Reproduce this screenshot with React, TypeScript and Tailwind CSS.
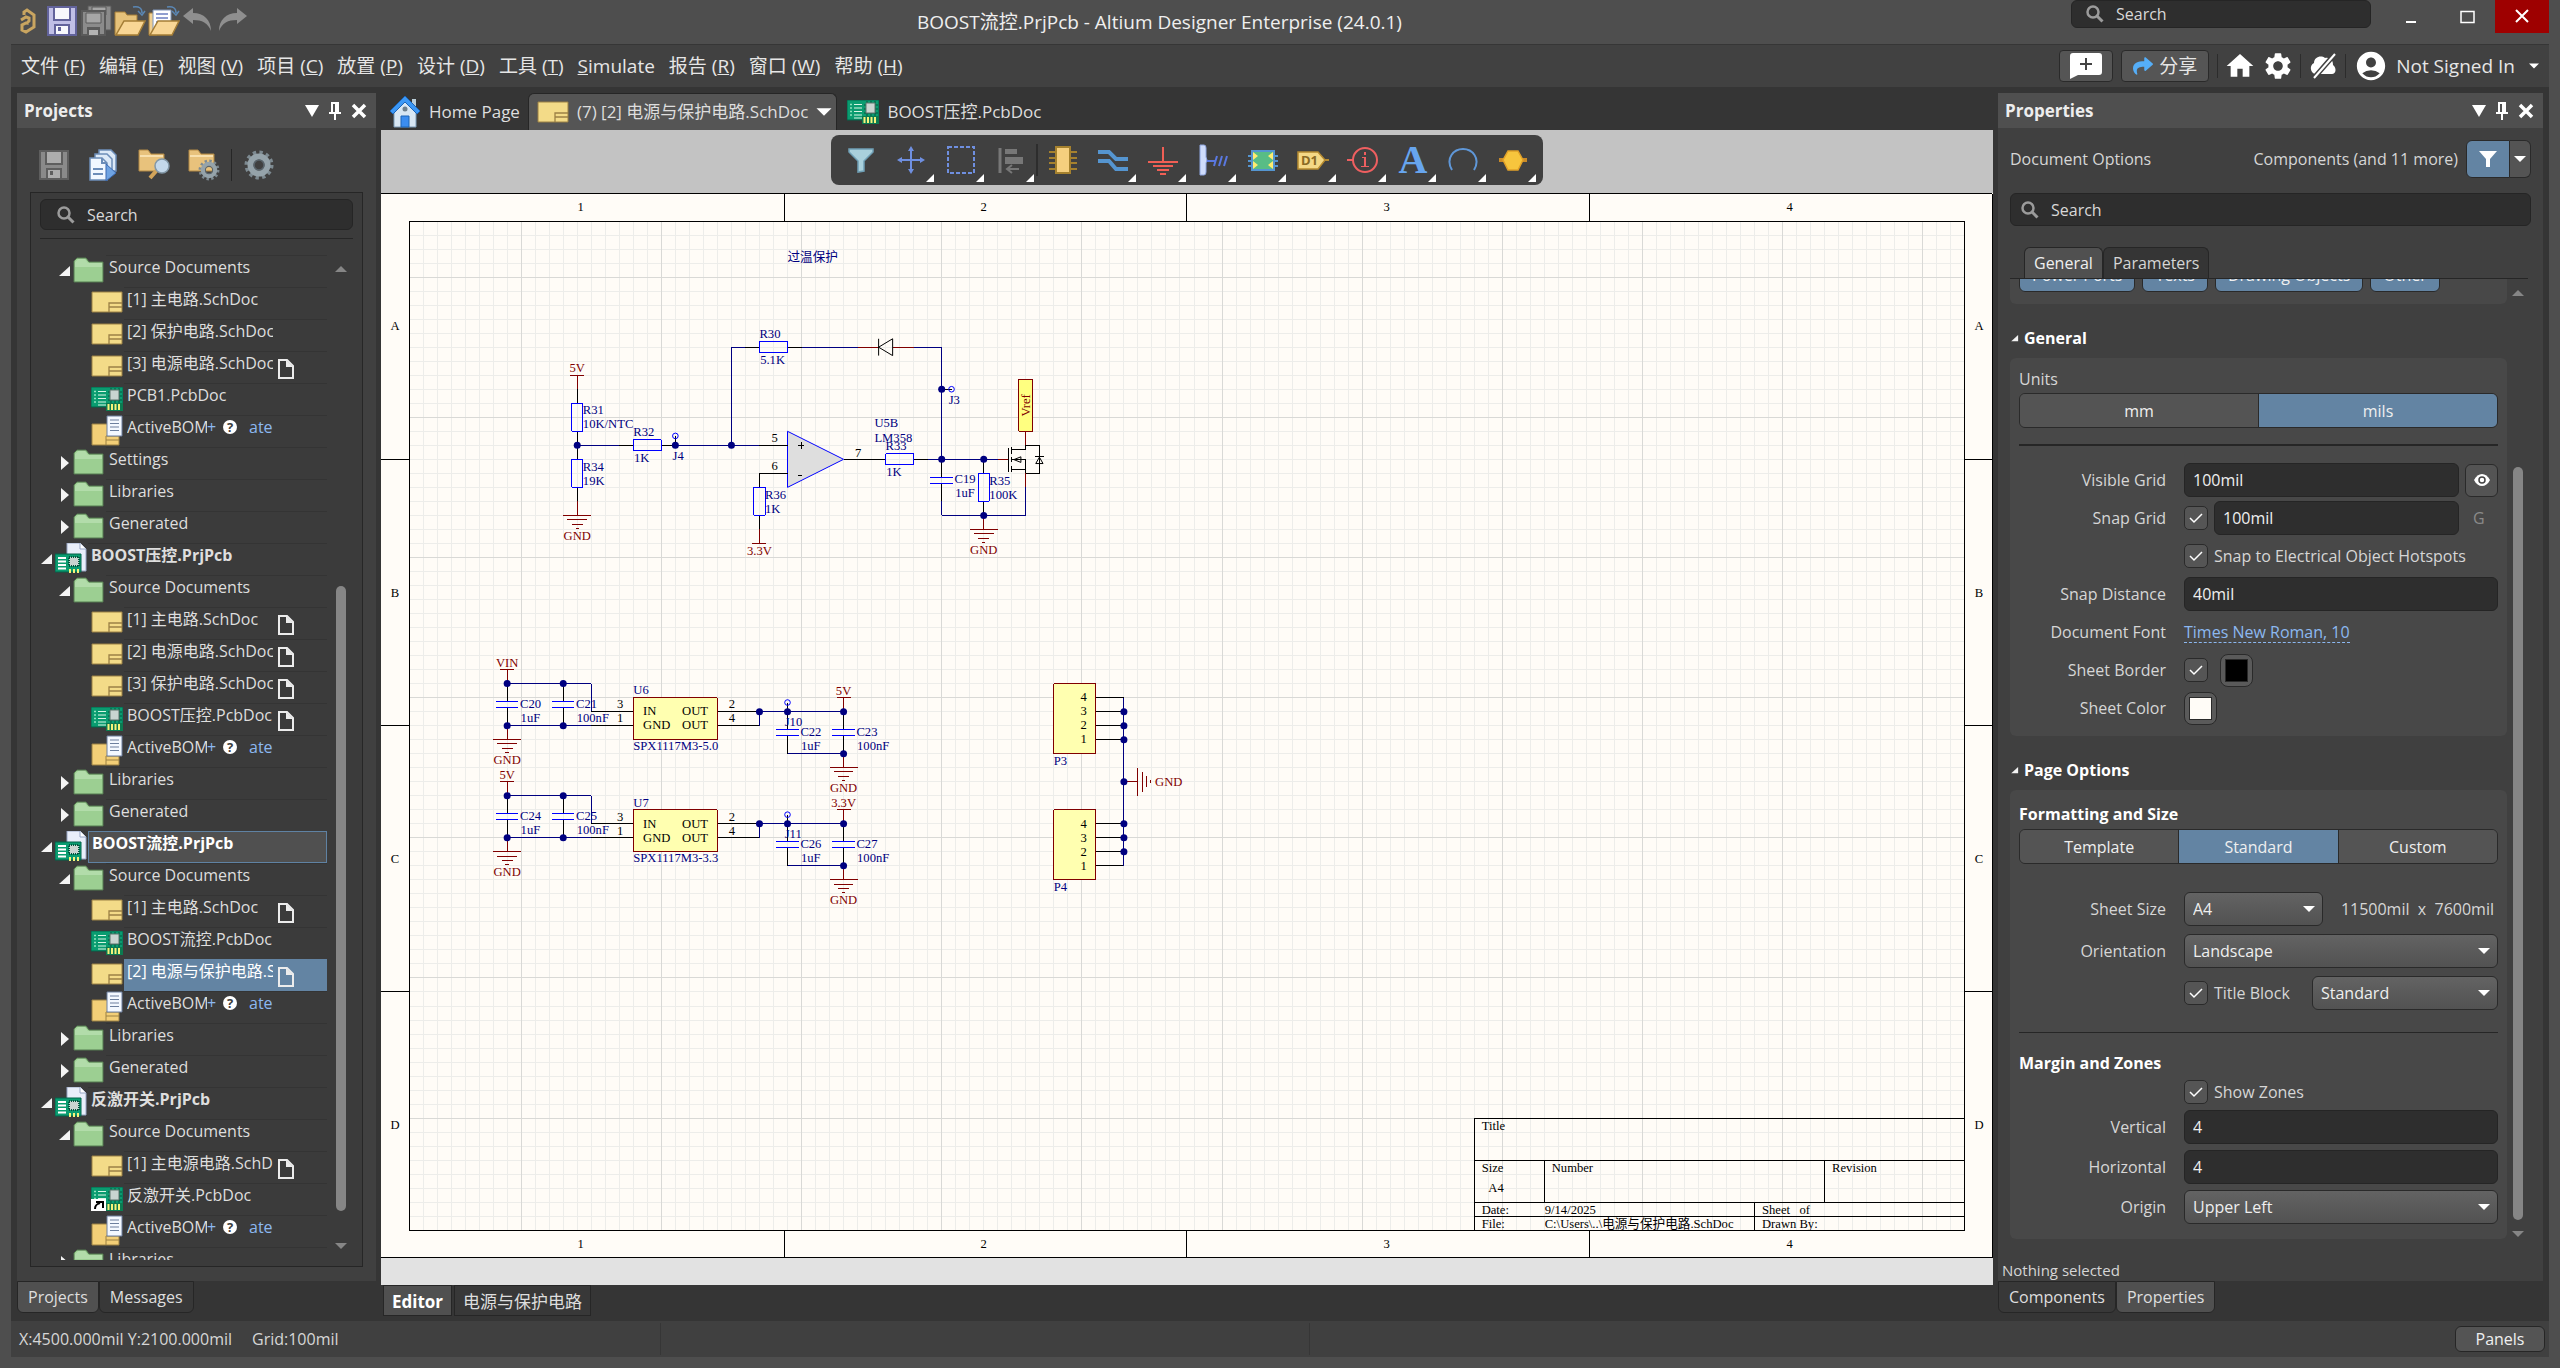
import type { ReactNode } from "react";
import clsx from "clsx";
import { FaShare } from "react-icons/fa";
import { MdAccountCircle, MdHome, MdSettings } from "react-icons/md";

const uiFont = "font-['Open_Sans','Noto_Sans_CJK_SC',sans-serif]";

/* ---------- icons ---------- */

function SaveIcon({ body = "#62639b", trim = "#c0bfe6", label = "#f7f8fc", className = "size-8" }) {
  return (
    <svg viewBox="0 0 32 32" className={className}>
      <path d="M2 2h28v28H2z" fill={trim} stroke={body} strokeWidth="2" />
      <path d="M7 2h18v14H7z" fill={body} />
      <path d="M9 3h14v11H9z" fill={label} />
      <path d="M8 19h16v11H8z" fill={body} />
      <path d="M10 21h12v8H10z" fill={label} />
      <path d="M12 22h3v4h-3z" fill={body} />
    </svg>
  );
}

function SaveAllIcon() {
  return (
    <svg viewBox="0 0 32 32" className="size-8">
      <path d="M8 1h23v24H8z" fill="#8b8b8b" stroke="#5a5a5a" />
      <path d="M12 2h14v8H12z" fill="#a6a6a6" stroke="#5a5a5a" />
      <path d="M2 6h23v24H2z" fill="#8b8b8b" stroke="#5a5a5a" strokeWidth="2" />
      <path d="M6 8h15v10H6z" fill="#a6a6a6" stroke="#5a5a5a" />
      <path d="M7 22h13v8H7z" fill="#5a5a5a" />
      <path d="M9 25h9v5H9z" fill="#b3b3b3" />
    </svg>
  );
}

function OpenFolderIcon({ doc = false }) {
  return (
    <svg viewBox="0 0 32 32" className="size-8">
      {!doc && <path d="M1 7h10l2 3h10v20H1z" fill="#e6c27a" stroke="#a47d36" />}
      {doc && (
        <>
          <path d="M1 8h8v22H1z" fill="#f0cf90" stroke="#a47d36" />
          <path d="M5 5h18v22H5z" fill="#fff" stroke="#7f94b8" />
          <path d="M8 9h12M8 13h12M8 17h12" stroke="#6c7fc0" strokeWidth="1.500" />
        </>
      )}
      <path d="M10 16h21l-7 14H2z" fill="#f8d695" stroke="#a47d36" strokeWidth="1.500" />
      <path d="M19 2c6-1 9 1 9 6M24 6l4 4 3-4" fill="none" stroke="#5b87b4" strokeWidth="1.500" />
    </svg>
  );
}

function UndoIcon({ flip = false }) {
  return (
    <svg viewBox="0 0 32 32" className={clsx("size-8", flip && "-scale-x-100")}>
      <path d="M1 11 11 3v5c11 0 18 7 18 18-3-8-9-11-18-11v4z" fill="#8f8f8f" />
    </svg>
  );
}

function SearchIcon() {
  return (
    <svg viewBox="0 0 18 18" className="size-[18px] shrink-0">
      <circle cx="7" cy="7" r="5.500" fill="none" stroke="#9b9b9b" strokeWidth="2.500" />
      <path d="m11 11 5.500 5.500" stroke="#9b9b9b" strokeWidth="3" />
    </svg>
  );
}

function LogoIcon() {
  return (
    <svg viewBox="0 0 20 28" className="h-7 w-5">
      <path
        d="M6 8V5l3-2 7 5v12l-8 5-4-2v-5l4-2h3M3 13l5-3 3 1v3l-3 3"
        fill="none"
        stroke="#c9a560"
        strokeWidth="3"
      />
    </svg>
  );
}

function DocsIcon() {
  return (
    <svg viewBox="0 0 32 32" className="size-8">
      <path d="M11 1h12l5 5v16H11z" fill="#dce9f7" stroke="#6c8db8" strokeWidth="1.500" />
      <path d="M7 5h12l5 5v16H7z" fill="#dce9f7" stroke="#6c8db8" strokeWidth="1.500" />
      <path d="M2 9h12l5 5v17H2z" fill="#f2f8ff" stroke="#6c8db8" strokeWidth="1.500" />
      <path d="M14 9v5h5M5 20h10M5 25h10" fill="none" stroke="#6c8db8" strokeWidth="2" />
      <path d="m18 15 10 9-10 8z" fill="#6fa3e2" stroke="#3a69b0" />
    </svg>
  );
}

function Gear({ cx = 16, cy = 16, s = 1 }) {
  return (
    <g transform={`translate(${cx} ${cy}) scale(${s})`} fill="none">
      <circle r="12.5" stroke="#7d8a91" strokeWidth="4" strokeDasharray="3.3 3.25" />
      <circle r="8.5" stroke="#95a3aa" strokeWidth="6" />
      <circle r="5" stroke="#59646b" strokeWidth="1.5" />
    </g>
  );
}

function ToolFolderIcon({ children }: { children: ReactNode }) {
  return (
    <svg viewBox="0 0 32 32" className="size-8">
      <path d="M1 1h9l3 4h13v17H1z" fill="#e8c27c" stroke="#b18845" />
      <path d="M2 7h23" stroke="#f8e0ae" strokeWidth="2" />
      {children}
    </svg>
  );
}

function FolderIcon() {
  return (
    <svg viewBox="0 0 32 26" className="mt-[2px] h-[26px] w-8">
      <path d="M1 25V4l3-3h9l3 4h14v20z" fill="#9ccf92" stroke="#557a50" />
      <path d="M2 24V5l3-3h7l3 4h14v4H2z" fill="#b2dcaa" />
    </svg>
  );
}

function SchIcon({ className = "mt-1 h-[22px] w-8" }) {
  return (
    <svg viewBox="0 0 32 22" className={className}>
      <path d="M1 1h30v20H1z" fill="#f3db88" stroke="#9c8145" />
      <path d="M31 12H18v9M18 16h13" fill="none" stroke="#9c8145" strokeWidth="1.3" />
    </svg>
  );
}

function PcbIcon({ link = false, className = "mt-1 h-6 w-8" }) {
  return (
    <svg viewBox="0 0 32 24" className={className}>
      <path d="M0 0h32v20H0z" fill="#0a9c70" stroke="#04634a" />
      <path d="M7 4.500h8M7 8h8M7 11.500h8M7 15h8M7 18h8" stroke="#d8f5e4" strokeWidth="1.200" />
      <path d="M3 4.500h2M3 8h2M3 11.500h2M3 15h2" stroke="#8fe2bd" strokeWidth="1.500" />
      <path d="M17 5h14M17 9h14M17 13h14M20 1v15M24 1v15M28 1v15" stroke="#04543e" />
      <path d="M19 3h9v10h-9z" fill="#c9d4d0" stroke="#5d756c" />
      <path d="M15 16h17v8H15z" fill="#0c7a50" />
      <path d="M17.500 17v6M21 17v6M24.500 17v6M28 17v6" stroke="#f6f27b" strokeWidth="2" />
      {link && (
        <>
          <path d="M0 12h15v12H0z" fill="#fff" />
          <path d="M4 22c0-4 2-5 5-6M5 15h7v6" fill="none" stroke="#000" strokeWidth="2" />
        </>
      )}
    </svg>
  );
}

function BomIcon() {
  return (
    <svg viewBox="0 0 32 32" className="h-8 w-8">
      <path d="M1 9h27v21H1z" fill="#f3cf77" stroke="#9c8145" />
      <path d="M28 21H15v9M15 25h13" fill="none" stroke="#9c8145" />
      <path d="M16 1h15v20H16z" fill="#f3f8ff" stroke="#6c7f9e" />
      <path d="M19 5h9M19 8.500h9M19 12h9M19 15.500h9" stroke="#6c7f9e" />
    </svg>
  );
}

function ProjectIcon() {
  return (
    <svg viewBox="0 0 32 32" className="h-8 w-8">
      <path d="M12 0h13l6 6v22H12z" fill="#e9eefa" stroke="#97a5c4" />
      <path d="M25 0v6h6" fill="#fff" stroke="#97a5c4" />
      <path d="M0 11h26v18H0z" fill="#0a9c70" stroke="#04634a" />
      <path d="M3 15h8M3 18.500h8M3 22h8M3 25.500h8" stroke="#fff" strokeWidth="1.800" />
      <path d="M14 14h10v9H14z" fill="#c9d4d0" stroke="#04543e" strokeDasharray="1 1" strokeWidth="2" />
      <path d="M15 26v4M19 26v4M23 26v4" stroke="#f6f27b" strokeWidth="2" />
    </svg>
  );
}

function HomePageIcon() {
  return (
    <svg viewBox="0 0 30 32" className="h-8 w-8">
      <path d="M22 3h4v9h-4z" fill="#b9cdd8" />
      <path d="M4 15 15 3l11 12v16H4z" fill="#d7e6f3" stroke="#7d9cb8" />
      <path d="M15 0 30 15l-3 3L15 6 3 18l-3-3z" fill="#3b97f5" stroke="#1d64b6" />
      <circle cx="15" cy="13" r="2.500" fill="#6d7f8c" />
      <path d="M11 20h8v11h-8z" fill="#3b8df0" stroke="#1d64b6" />
    </svg>
  );
}

function NewDocIcon() {
  return (
    <svg viewBox="0 0 16 20" className="mt-[7px] h-5 w-4">
      <path d="M1 1h8l6 6v12H1z" fill="none" stroke="#ececec" strokeWidth="2" />
      <path d="M8 1v7h7z" fill="#ececec" />
    </svg>
  );
}

function Caret({ className = "h-2 w-3" }) {
  return (
    <svg viewBox="0 0 12 8" className={className}>
      <path d="M0 1h12L6 7z" fill="currentColor" />
    </svg>
  );
}

function Expander({ open, className = "size-4" }: { open: boolean; className?: string }) {
  return (
    <svg viewBox="0 0 16 16" className={className}>
      <path d={open ? "M13 3v10H2z" : "M4 1l8 7-8 7z"} fill="#f4f4f4" />
    </svg>
  );
}

/* ---------- shared pieces ---------- */

function PanelHeader({ title }: { title: string }) {
  return (
    <header className="flex h-[35px] shrink-0 items-center bg-[#4f4f4f] pr-[9px] pl-[7px]">
      <h2 className="flex-1 text-[17px] leading-6 font-bold text-[#ededed]">{title}</h2>
      <div className="flex items-center gap-2.5 text-white">
        <button aria-label={`${title} menu`}>
          <svg viewBox="0 0 14 12" className="h-3 w-3.5">
            <path d="M0 0h14L7 12z" fill="currentColor" />
          </svg>
        </button>
        <button aria-label={`Pin ${title}`}>
          <svg viewBox="0 0 12 18" className="h-[18px] w-3">
            <path d="M2 0h8v10h2v2H0v-2h2zM5 12h2v6H5z" fill="currentColor" />
            <path d="M4 2h2v8H4z" fill="#4f4f4f" />
          </svg>
        </button>
        <button aria-label={`Close ${title}`}>
          <svg viewBox="0 0 16 16" className="size-4">
            <path d="M2 2l12 12M14 2 2 14" stroke="currentColor" strokeWidth="3.500" />
          </svg>
        </button>
      </div>
    </header>
  );
}

function SearchBox({ id, className }: { id: string; className?: string }) {
  return (
    <label
      htmlFor={id}
      className={clsx("flex items-center gap-3 rounded-md border border-[#252525] bg-[#2e2e2e]", className)}
    >
      <SearchIcon />
      <input
        id={id}
        placeholder="Search"
        className="w-full min-w-0 bg-transparent text-base leading-6 outline-none placeholder:text-[#d8d8d8]"
      />
    </label>
  );
}

function Scrollbar({ className, before, after }: { className?: string; before: string; after: string }) {
  return (
    <div className={clsx("flex shrink-0 flex-col items-center text-[#868686]", className)}>
      <Caret className="h-2 w-3 rotate-180" />
      <div className={clsx("shrink-0", before)} />
      <div className="w-2.5 flex-1 rounded-full bg-[#868686]" />
      <div className={clsx("shrink-0", after)} />
      <Caret className="h-2 w-3 shrink-0" />
    </div>
  );
}

/* ---------- title and menu bars ---------- */

function TitleBar() {
  return (
    <div className="flex h-11 shrink-0 items-start">
      <div className="flex h-[42px] w-[237px] items-center gap-0.5 pl-[7px]">
        <LogoIcon />
        <button aria-label="Save" className="ml-1.5">
          <SaveIcon />
        </button>
        <button aria-label="Save all">
          <SaveAllIcon />
        </button>
        <button aria-label="Open">
          <OpenFolderIcon />
        </button>
        <button aria-label="Open document">
          <OpenFolderIcon doc />
        </button>
        <button aria-label="Undo">
          <UndoIcon />
        </button>
        <button aria-label="Redo">
          <UndoIcon flip />
        </button>
      </div>
      <h1 className="h-11 flex-1 text-center text-[19px] leading-[44px] text-[#efefef]">
        BOOST流控.PrjPcb - Altium Designer Enterprise (24.0.1)
      </h1>
      <SearchBox id="app-search" className="h-7 w-[300px] px-3.5" />
      <div className="ml-5 flex h-[33px] text-white">
        <button aria-label="Minimize" className="w-[50px]">
          <svg viewBox="0 0 50 33" className="h-[33px] w-[50px]">
            <path d="M15 22h10" stroke="currentColor" strokeWidth="2" />
          </svg>
        </button>
        <button aria-label="Maximize" className="w-[54px]">
          <svg viewBox="0 0 54 33" className="h-[33px] w-[54px]">
            <path d="M20 11.500h13v11H20z" fill="none" stroke="currentColor" strokeWidth="1.500" />
          </svg>
        </button>
        <button aria-label="Close" className="w-[54px] bg-[#9e0000]">
          <svg viewBox="0 0 54 33" className="h-[33px] w-[54px]">
            <path d="m21 10 12 12M33 10 21 22" stroke="currentColor" strokeWidth="2" />
          </svg>
        </button>
      </div>
    </div>
  );
}

const menus = [
  ["文件", "F"],
  ["编辑", "E"],
  ["视图", "V"],
  ["项目", "C"],
  ["放置", "P"],
  ["设计", "D"],
  ["工具", "T"],
  ["Simulate", ""],
  ["报告", "R"],
  ["窗口", "W"],
  ["帮助", "H"],
];

function MenuBar() {
  return (
    <div className="flex h-[43px] shrink-0 items-center border-t border-[#363636] bg-[#414141]">
      <nav className="flex flex-1 gap-3.5 pl-2.5">
        {menus.map(([name, key]) => (
          <button key={name} className="text-[19px] leading-6 whitespace-nowrap text-[#e6e6e6]">
            {key ? (
              <>
                {name} (<u>{key}</u>)
              </>
            ) : (
              <>
                <u>S</u>imulate
              </>
            )}
          </button>
        ))}
      </nav>
      <div className="flex items-center text-white">
        <button aria-label="Comment" className="flex h-8 w-[54px] items-center justify-center rounded border border-[#2a2a2a] bg-[#555]">
          <svg viewBox="0 0 32 26" className="h-[26px] w-8">
            <path d="M3 0h26q3 0 3 3v16q0 3-3 3H8l-8 4V3q0-3 3-3z" fill="currentColor" />
            <path d="M16 5v12M10 11h12" stroke="#444" strokeWidth="2" />
          </svg>
        </button>
        <button className="mr-2 ml-2 flex h-8 w-[88px] items-center justify-center gap-1.5 rounded border border-[#2a2a2a] bg-[#555] text-[19px] leading-6 text-[#e6e6e6]">
          <FaShare className="size-5 text-[#55aef8]" />
          分享
        </button>
        <span className="h-6 w-px bg-[#2c2c2c]" />
        <button aria-label="Home" className="ml-1.5">
          <MdHome className="size-8" />
        </button>
        <button aria-label="Settings" className="mx-1.5">
          <MdSettings className="size-8" />
        </button>
        <span className="h-6 w-px bg-[#2c2c2c]" />
        <button aria-label="Server offline" className="mx-2">
          <svg viewBox="0 0 28 26" className="h-[26px] w-7">
            <path d="M6 21a6 6 0 0 1-1-11C5 4 12 2 16 5c6-1 8 3 8 7 4 3 3 9-1 9z" fill="currentColor" />
            <path d="M25 2 5 25" stroke="#414141" strokeWidth="5" />
            <path d="M26 1 5 25" stroke="currentColor" strokeWidth="2" />
          </svg>
        </button>
        <span className="h-6 w-px bg-[#2c2c2c]" />
        <button className="mr-2.5 ml-2 flex items-center gap-2 text-[19px] leading-6 text-[#e6e6e6]">
          <MdAccountCircle className="size-[34px] text-white" />
          Not Signed In
          <Caret className="ml-1.5 h-2 w-2.5 text-white" />
        </button>
      </div>
    </div>
  );
}

/* ---------- projects panel ---------- */

type Node = {
  kind: "project" | "folder" | "sch" | "pcb" | "pcbLink" | "bom";
  name: string;
  open?: boolean;
  modified?: boolean;
  state?: "outlined" | "selected";
};

const bom: Node = { kind: "bom", name: "ActiveBOM" };
const sources: Node = { kind: "folder", name: "Source Documents", open: true };
const libraries: Node = { kind: "folder", name: "Libraries" };
const generated: Node = { kind: "folder", name: "Generated" };

const tree: Node[] = [
  sources,
  { kind: "sch", name: "[1] 主电路.SchDoc" },
  { kind: "sch", name: "[2] 保护电路.SchDoc" },
  { kind: "sch", name: "[3] 电源电路.SchDoc", modified: true },
  { kind: "pcb", name: "PCB1.PcbDoc" },
  bom,
  { kind: "folder", name: "Settings" },
  libraries,
  generated,
  { kind: "project", name: "BOOST压控.PrjPcb", open: true },
  sources,
  { kind: "sch", name: "[1] 主电路.SchDoc", modified: true },
  { kind: "sch", name: "[2] 电源电路.SchDoc", modified: true },
  { kind: "sch", name: "[3] 保护电路.SchDoc", modified: true },
  { kind: "pcb", name: "BOOST压控.PcbDoc", modified: true },
  bom,
  libraries,
  generated,
  { kind: "project", name: "BOOST流控.PrjPcb", open: true, state: "outlined" },
  sources,
  { kind: "sch", name: "[1] 主电路.SchDoc", modified: true },
  { kind: "pcb", name: "BOOST流控.PcbDoc" },
  { kind: "sch", name: "[2] 电源与保护电路.SchDoc", modified: true, state: "selected" },
  bom,
  libraries,
  generated,
  { kind: "project", name: "反激开关.PrjPcb", open: true },
  sources,
  { kind: "sch", name: "[1] 主电源电路.SchDoc", modified: true },
  { kind: "pcbLink", name: "反激开关.PcbDoc" },
  bom,
  libraries,
];

function TreeIcon({ kind }: { kind: Node["kind"] }) {
  if (kind === "project") return <ProjectIcon />;
  if (kind === "folder") return <FolderIcon />;
  if (kind === "sch") return <SchIcon />;
  if (kind === "bom") return <BomIcon />;
  return <PcbIcon link={kind === "pcbLink"} />;
}

function TreeRow({ node }: { node: Node }) {
  const leaf = node.kind !== "project" && node.kind !== "folder";
  return (
    <li
      className={clsx(
        "flex h-8 shrink-0",
        node.kind === "project" && "pl-2",
        node.kind === "folder" && "pl-[26px]",
        leaf && "pl-[60px]"
      )}
    >
      {!leaf && <Expander open={!!node.open} className="mt-2 size-4 shrink-0" />}
      <span className="w-[33px] shrink-0">
        <TreeIcon kind={node.kind} />
      </span>
      <div
        className={clsx(
          "flex min-w-0 flex-1 border-t pl-[3px] leading-[22px] whitespace-nowrap",
          !node.state && "border-[#343434] text-[#dedede]",
          node.state === "outlined" && "border border-[#5f82a3] bg-[#505050] text-white",
          node.state === "selected" && "border-[#6384a3] bg-[#6384a3] text-white",
          node.kind === "project" && "font-bold"
        )}
      >
        {node.kind === "bom" ? (
          <>
            <span className="w-20 overflow-hidden">{node.name}</span>
            <span className="w-4 text-[#8cb8f0]">+</span>
            <span className="mt-1 size-[14px] rounded-full bg-white text-center text-[13px] leading-[14px] font-bold text-[#3b3b3b]">
              ?
            </span>
            <span className="ml-3 text-[#8cb8f0]">ate</span>
          </>
        ) : (
          <span className={clsx(leaf && "w-[146px] overflow-hidden")}>{node.name}</span>
        )}
        {node.modified && (
          <span className="ml-[5px]">
            <NewDocIcon />
          </span>
        )}
      </div>
    </li>
  );
}

function ProjectsPanel() {
  return (
    <aside className="flex w-[359px] shrink-0 flex-col text-base">
      <div className="flex min-h-0 flex-1 flex-col bg-[#404040]">
        <PanelHeader title="Projects" />
        <div className="flex h-16 shrink-0 items-center pt-2.5 pl-[21px]">
          <button aria-label="Save project">
            <SaveIcon body="#5e5e5e" trim="#8a8a8a" label="#adadad" />
          </button>
          <button aria-label="Copy documents" className="ml-[18px]">
            <DocsIcon />
          </button>
          <button aria-label="Find in project" className="ml-[18px]">
            <ToolFolderIcon>
              <path d="m19 21-7 8" stroke="#d2a45a" strokeWidth="4" />
              <circle cx="24" cy="17" r="7" fill="#c3d8ea" stroke="#8297a6" strokeWidth="1.500" />
            </ToolFolderIcon>
          </button>
          <button aria-label="Project options" className="ml-[18px]">
            <ToolFolderIcon>
              <Gear cx={21} cy={21} s={0.72} />
            </ToolFolderIcon>
          </button>
          <span className="mx-[11px] h-8 w-px bg-[#262626]" />
          <button aria-label="Panel settings">
            <svg viewBox="0 0 32 32" className="size-8">
              <Gear />
            </svg>
          </button>
        </div>
        <div className="mx-[13px] mb-3.5 flex min-h-0 flex-1 flex-col border border-[#262626] bg-[#3b3b3b] pt-1.5 pb-1.5">
          <SearchBox id="project-search" className="mx-[9px] h-[31px] shrink-0 px-4" />
          <hr className="mx-[9px] mt-2 border-[#262626]" />
          <div className="mt-4 flex min-h-0 flex-1 overflow-hidden">
            <ul className="flex min-w-0 flex-1 flex-col">
              {tree.map((node, i) => (
                <TreeRow key={i} node={node} />
              ))}
            </ul>
            <Scrollbar className="mr-2 w-[27px] pt-2.5 pb-2.5" before="h-[313px]" after="h-[31px]" />
          </div>
        </div>
      </div>
      <BottomTabs tabs={["Projects", "Messages"]} active="Projects" />
    </aside>
  );
}

function BottomTabs({ tabs, active }: { tabs: string[]; active: string }) {
  return (
    <div className="flex h-10 shrink-0 items-start">
      {tabs.map((tab) => (
        <button
          key={tab}
          className={clsx(
            "h-8 rounded-b-md border border-[#262626] px-2.5 text-base leading-[30px] text-[#dedede]",
            tab === active ? "bg-[#505050]" : "bg-[#383838]"
          )}
        >
          {tab}
        </button>
      ))}
    </div>
  );
}

/* ---------- schematic sheet, in mils ---------- */

const navy = "#000080";
const maroon = "#800000";

function Wire({ d, color = navy }: { d: string; color?: string }) {
  return (
    <path d={d} fill="none" stroke={color} strokeWidth="1" vectorEffect="non-scaling-stroke" shapeRendering="crispEdges" />
  );
}

type LabelProps = { x: number; y: number; color?: string; anchor?: "start" | "middle" | "end"; children: ReactNode };

function Label({ x, y, color = navy, anchor = "start", children }: LabelProps) {
  return (
    <text x={x} y={y} fill={color} textAnchor={anchor} fontSize="90">
      {children}
    </text>
  );
}

function Dot({ x, y }: { x: number; y: number }) {
  return <circle cx={x} cy={y} r="25" fill={navy} />;
}

type BoxProps = { x: number; y: number; w: number; h: number; fill?: string; stroke?: string };

function Box({ x, y, w, h, fill = "none", stroke = "#0000ff" }: BoxProps) {
  return (
    <rect
      x={x}
      y={y}
      width={w}
      height={h}
      fill={fill}
      stroke={stroke}
      vectorEffect="non-scaling-stroke"
      shapeRendering="crispEdges"
    />
  );
}

type PartProps = { x: number; y: number; name: string; value: string };

// x, y is the first pin; the body sits one grid step away
function Resistor({ x, y, name, value, vertical = false }: PartProps & { vertical?: boolean }) {
  if (vertical) {
    return (
      <>
        <Wire color="#000" d={`M${x} ${y}v100M${x} ${y + 300}v100`} />
        <Box x={x - 40} y={y + 100} w={80} h={200} />
        <Label x={x + 40} y={y + 180}>{name}</Label>
        <Label x={x + 40} y={y + 280}>{value}</Label>
      </>
    );
  }
  return (
    <>
      <Wire color="#000" d={`M${x} ${y}h100M${x + 300} ${y}h100`} />
      <Box x={x + 100} y={y - 40} w={200} h={80} />
      <Label x={x + 100} y={y - 63}>{name}</Label>
      <Label x={x + 105} y={y + 118}>{value}</Label>
    </>
  );
}

function Capacitor({ x, y, name, value }: PartProps) {
  return (
    <>
      <Wire color="#000" d={`M${x} ${y}v130M${x} ${y + 170}v130`} />
      <Wire color="#0000ff" d={`M${x - 80} ${y + 130}h160M${x - 80} ${y + 170}h160`} />
      <Label x={x + 92} y={y + 172}>{name}</Label>
      <Label x={x + 96} y={y + 272}>{value}</Label>
    </>
  );
}

function Ground({ x, y }: { x: number; y: number }) {
  return (
    <>
      <Wire
        color={maroon}
        d={`M${x} ${y}v100M${x - 100} ${y + 100}h200M${x - 70} ${y + 130}h140M${x - 40} ${y + 162}h80M${x - 12} ${y + 192}h24`}
      />
      <Label x={x} y={y + 275} color={maroon} anchor="middle">GND</Label>
    </>
  );
}

function Power({ x, y, name }: { x: number; y: number; name: string }) {
  return (
    <>
      <Wire color={maroon} d={`M${x} ${y}v-100M${x - 50} ${y - 100}h100`} />
      <Label x={x} y={y - 120} color={maroon} anchor="middle">{name}</Label>
    </>
  );
}

function TestPoint({ x, y, dx = 0, dy = 0 }: { x: number; y: number; dx?: number; dy?: number }) {
  return (
    <>
      <Wire color="#000" d={`M${x} ${y}l${dx} ${dy}`} />
      <circle cx={x + dx} cy={y + dy} r="20" fill="none" stroke="#0000ff" vectorEffect="non-scaling-stroke" />
    </>
  );
}

type RegulatorProps = {
  y: number;
  input: string;
  output: string;
  name: string;
  part: string;
  caps: string[];
  tp: string;
};

function Regulator({ y, input, output, name, part, caps, tp }: RegulatorProps) {
  return (
    <g>
      <Power x={900} y={y} name={input} />
      <Wire d={`M900 ${y}H1500v200M900 ${y + 300}H1500M2700 ${y + 300}v-100H3300M2900 ${y + 500}h400`} />
      <Wire color="#000" d={`M1500 ${y + 200}h300M1500 ${y + 300}h300M2400 ${y + 200}h300M2400 ${y + 300}h300`} />
      <Box x={1800} y={y + 100} w={600} h={300} fill="#ffffb0" stroke={maroon} />
      <Capacitor x={900} y={y} name={caps[0]} value="1uF" />
      <Capacitor x={1300} y={y} name={caps[1]} value="100nF" />
      <Capacitor x={2900} y={y + 200} name={caps[2]} value="1uF" />
      <Capacitor x={3300} y={y + 200} name={caps[3]} value="100nF" />
      <Ground x={900} y={y + 300} />
      <Ground x={3300} y={y + 500} />
      <Power x={3300} y={y + 200} name={output} />
      <TestPoint x={2900} y={y + 200} dy={-65} />
      <Label x={2880} y={y + 300}>{tp}</Label>
      <Label x={1800} y={y + 77}>{name}</Label>
      <Label x={1800} y={y + 476}>{part}</Label>
      <Label x={1870} y={y + 227} color="#000">IN</Label>
      <Label x={1870} y={y + 327} color="#000">GND</Label>
      <Label x={2333} y={y + 227} color="#000" anchor="end">OUT</Label>
      <Label x={2333} y={y + 327} color="#000" anchor="end">OUT</Label>
      <Label x={1684} y={y + 177} color="#000">3</Label>
      <Label x={1684} y={y + 277} color="#000">1</Label>
      <Label x={2480} y={y + 177} color="#000">2</Label>
      <Label x={2480} y={y + 277} color="#000">4</Label>
      <Dot x={900} y={y} />
      <Dot x={1300} y={y} />
      <Dot x={900} y={y + 300} />
      <Dot x={1300} y={y + 300} />
      <Dot x={2700} y={y + 200} />
      <Dot x={2900} y={y + 200} />
      <Dot x={3300} y={y + 200} />
      <Dot x={3300} y={y + 500} />
    </g>
  );
}

function Header4({ y, name }: { y: number; name: string }) {
  return (
    <g>
      <Box x={4800} y={y} w={300} h={500} fill="#ffffb0" stroke={maroon} />
      {[4, 3, 2, 1].map((pin, i) => (
        <g key={pin}>
          <Wire color="#000" d={`M5100 ${y + 100 + i * 100}h200`} />
          <Label x={5035} y={y + 127 + i * 100} color="#000" anchor="end">{pin}</Label>
        </g>
      ))}
      <Label x={4800} y={y + 578}>{name}</Label>
    </g>
  );
}

function Protection() {
  return (
    <g>
      <Label x={2900} y={485}>过温保护</Label>
      <Power x={1400} y={1400} name="5V" />
      <Resistor vertical x={1400} y={1400} name="R31" value="10K/NTC" />
      <Resistor vertical x={1400} y={1800} name="R34" value="19K" />
      <Ground x={1400} y={2200} />
      <Wire d="M1400 1800H1700M2100 1800H2700M2500 1800V1100H2600M3000 1100H3400M3800 1100H4000V1900M3900 1900H4400M4000 2200V2300H4600V2100" />
      <Resistor x={1700} y={1800} name="R32" value="1K" />
      <Resistor x={2600} y={1100} name="R30" value="5.1K" />
      <Resistor x={3500} y={1900} name="R33" value="1K" />
      <Wire color={maroon} d="M3400 1100H3550M3650 1100H3800M4400 1900H4475M4600 1700V1800M4600 2000V2100" />
      <path d="M3550 1040v120M3550 1100l100-60v120z" fill="none" stroke="#000" vectorEffect="non-scaling-stroke" />

      <path d="M2900 1700V2100L3300 1900z" fill="#dedede" stroke="#0000ff" vectorEffect="non-scaling-stroke" />
      <Wire color="#000" d="M2700 1800H2900M2700 2000H2900M2700 2000V2100M3300 1900H3500M2975 1800h45M2997 1778v45M2975 2015h25" />
      <Label x={2785} y={1779} color="#000">5</Label>
      <Label x={2785} y={1979} color="#000">6</Label>
      <Label x={3382} y={1881} color="#000">7</Label>
      <Label x={3520} y={1667}>U5B</Label>
      <Label x={3520} y={1774}>LM358</Label>
      <Resistor vertical x={2700} y={2000} name="R36" value="1K" />
      <Wire color={maroon} d="M2700 2400v100M2650 2500h100" />
      <Label x={2700} y={2580} color={maroon} anchor="middle">3.3V</Label>

      <TestPoint x={2100} y={1800} dy={-67} />
      <Label x={2080} y={1902}>J4</Label>
      <TestPoint x={4000} y={1400} dx={70} />
      <Label x={4050} y={1508}>J3</Label>

      <Capacitor x={4000} y={1900} name="C19" value="1uF" />
      <Resistor vertical x={4300} y={1900} name="R35" value="100K" />
      <Ground x={4300} y={2300} />

      <Wire
        color="#000"
        d="M4475 1820V1988M4497 1814V1862M4497 1880V1922M4497 1945V1993M4497 1829H4600V1800H4700V2000H4600V1902H4497M4497 1969H4600M4667 1881H4730"
      />
      <path d="M4515 1902l50-20v40zM4697 1885l-26 45h52z" fill="none" stroke="#000" vectorEffect="non-scaling-stroke" />
      <Box x={4550} y={1330} w={100} h={370} fill="#ffff80" stroke={maroon} />
      <text transform="translate(4628 1515) rotate(-90)" fill={maroon} textAnchor="middle" fontSize="90">
        Vref
      </text>

      <Dot x={1400} y={1800} />
      <Dot x={2100} y={1800} />
      <Dot x={2500} y={1800} />
      <Dot x={4000} y={1400} />
      <Dot x={4000} y={1900} />
      <Dot x={4300} y={1900} />
      <Dot x={4300} y={2300} />
    </g>
  );
}

function TitleBlock() {
  return (
    <g>
      <Wire color="#000" d="M7800 7400V6600H11300M7800 6900H11300M7800 7200H11300M7800 7300H11300M8300 6900v300M10300 6900v300M9800 7200v200" />
      <Label x={7852} y={6682} color="#000">Title</Label>
      <Label x={7852} y={6982} color="#000">Size</Label>
      <Label x={7900} y={7130} color="#000">A4</Label>
      <Label x={8352} y={6982} color="#000">Number</Label>
      <Label x={10352} y={6982} color="#000">Revision</Label>
      <Label x={7852} y={7282} color="#000">Date:</Label>
      <Label x={8302} y={7282} color="#000">9/14/2025</Label>
      <Label x={7852} y={7382} color="#000">File:</Label>
      <Label x={8302} y={7386} color="#000">C:\Users\..\电源与保护电路.SchDoc</Label>
      <Label x={9852} y={7282} color="#000">Sheet</Label>
      <Label x={10119} y={7282} color="#000">of</Label>
      <Label x={9852} y={7382} color="#000">Drawn By:</Label>
    </g>
  );
}

const range = (from: number, to: number) => Array.from({ length: to - from + 1 }, (_, i) => from + i);
const isMajor = (n: number) => n % 10 === 0;

function Sheet() {
  const columns = range(3, 112);
  const rows = range(3, 73);
  const vertical = (list: number[]) => list.map((n) => `M${n * 100} 200V7400`).join("");
  // rows are counted from the lower edge
  const horizontal = (list: number[]) => list.map((n) => `M200 ${7600 - n * 100}H11300`).join("");

  return (
    <svg
      viewBox="0 0 11500 7600"
      className="block w-full shrink-0 bg-[#fffcf7] font-['Liberation_Serif','Noto_Sans_CJK_SC',serif]"
      role="img"
      aria-label="Schematic sheet"
    >
      <Wire color="#ededea" d={vertical(columns.filter((n) => !isMajor(n))) + horizontal(rows.filter((n) => !isMajor(n)))} />
      <Wire color="#d9d9d6" d={vertical(columns.filter(isMajor)) + horizontal(rows.filter(isMajor))} />
      <Wire color="#000" d="M200 200H11300V7400H200zM0 4H11496V7596H0" />
      {[1, 2, 3].map((n) => (
        <Wire
          key={n}
          color="#000"
          d={`M${n * 2875} 0v200M${n * 2875} 7400v200M0 ${n * 1900}h200M11300 ${n * 1900}h200`}
        />
      ))}
      {[1, 2, 3, 4].map((n) => (
        <g key={n}>
          <Label x={n * 2875 - 1450} y={128} color="#000" anchor="middle">{n}</Label>
          <Label x={n * 2875 - 1450} y={7528} color="#000" anchor="middle">{n}</Label>
          <Label x={100} y={n * 1900 - 920} color="#000" anchor="middle">{"ABCD"[n - 1]}</Label>
          <Label x={11400} y={n * 1900 - 920} color="#000" anchor="middle">{"ABCD"[n - 1]}</Label>
        </g>
      ))}

      <Protection />
      <Regulator y={3500} input="VIN" output="5V" name="U6" part="SPX1117M3-5.0" caps={["C20", "C21", "C22", "C23"]} tp="J10" />
      <Regulator y={4300} input="5V" output="3.3V" name="U7" part="SPX1117M3-3.3" caps={["C24", "C25", "C26", "C27"]} tp="J11" />

      <Header4 y={3500} name="P3" />
      <Header4 y={4400} name="P4" />
      <Wire d="M5300 3600V4800" />
      <Wire color={maroon} d="M5300 4200h100M5400 4100v200M5432 4130v140M5462 4160v80M5490 4188v24" />
      <Label x={5522} y={4228} color={maroon}>GND</Label>
      {[3700, 3800, 3900, 4200, 4500, 4600, 4700].map((y) => (
        <Dot key={y} x={5300} y={y} />
      ))}
      <TitleBlock />
    </svg>
  );
}

/* ---------- editor ---------- */

const tools: { name: string; menu: boolean; art: ReactNode }[] = [
  {
    name: "Filter",
    menu: false,
    art: <path d="M4 5h24v3l-9 9v10l-6 1V17L4 8z" fill="#a9d0dc" stroke="#6f9fb5" strokeWidth="1.500" />,
  },
  {
    name: "Move",
    menu: true,
    art: (
      <>
        <path d="M16 4v24M4 16h24" stroke="#6f8fe0" strokeWidth="2" />
        <path d="M16 2l3 5h-6zM16 30l3-5h-6zM2 16l5-3v6zM30 16l-5-3v6z" fill="#6f8fe0" />
      </>
    ),
  },
  {
    name: "Select",
    menu: true,
    art: <path d="M3 3h26v26H3z" fill="none" stroke="#6f8fe0" strokeWidth="2" strokeDasharray="4 2" />,
  },
  {
    name: "Align",
    menu: true,
    art: (
      <>
        <path d="M5 4v25" stroke="#777" strokeWidth="3" />
        <path d="M10 5h12v5H10zM10 13h18v7H10z" fill="#777" />
        <path d="M24 25H13m4-4-5 4 5 4" fill="none" stroke="#777" strokeWidth="2" />
      </>
    ),
  },
  {
    name: "Place part",
    menu: false,
    art: (
      <>
        <path d="M2 8h28M2 14h28M2 19h28M2 25h28" stroke="#a5812e" strokeWidth="2" />
        <path d="M9 3h14v26H9z" fill="#f5cf7e" stroke="#a5812e" strokeWidth="2" />
      </>
    ),
  },
  {
    name: "Place wire",
    menu: true,
    art: <path d="M1 8h11l7 7h12M1 17h11l7 8h12" fill="none" stroke="#5595d0" strokeWidth="4" />,
  },
  {
    name: "Place power port",
    menu: true,
    art: <path d="M16 3v14M1 18h30M6 22h20M10 26h12M13 30h6" stroke="#f05f55" strokeWidth="2" />,
  },
  {
    name: "Place harness",
    menu: true,
    art: (
      <>
        <path d="M3 1h4q2 0 2 3v9l1 3-1 3v9q0 3-2 3H3z" fill="#cfdcfb" stroke="#8fa6e0" />
        <path d="M10 17h8M17 22l3-10M22 22l3-10M27 22l3-10" stroke="#5a78e0" strokeWidth="2" />
      </>
    ),
  },
  {
    name: "Place sheet symbol",
    menu: true,
    art: (
      <>
        <path d="M1 12h30M1 17h30M1 22h30" stroke="#5595d0" strokeWidth="2" />
        <path d="M5 7h22v19H5z" fill="#58bd85" stroke="#5595d0" strokeWidth="2" />
        <path d="M6 8l5 4-5 4zM6 17l5 4-5 4zM26 8l-5 4 5 4zM26 17l-5 4 5 4z" fill="#ffec70" />
      </>
    ),
  },
  {
    name: "Place directive",
    menu: true,
    art: (
      <>
        <path d="M1 8h20l7 8-7 9H1z" fill="#f4d886" stroke="#b58a30" strokeWidth="1.500" />
        <path d="M28 16h4" stroke="#b58a30" strokeWidth="2" />
        <text x="4" y="21" fontSize="13" fontWeight="700" fill="#8a6a24">D1</text>
      </>
    ),
  },
  {
    name: "Place parameter set",
    menu: true,
    art: (
      <>
        <circle cx="18" cy="16" r="12" fill="none" stroke="#ef5f60" strokeWidth="2" />
        <path d="M0 16h6" stroke="#ef5f60" strokeWidth="2" />
        <path d="M15 13h4v9h3v1h-8v-1h3v-8h-2zM17 8h2v3h-2z" fill="#ef5f60" />
      </>
    ),
  },
  {
    name: "Place text",
    menu: true,
    art: (
      <text x="16" y="29" textAnchor="middle" fontSize="40" fontWeight="700" fill="#67a5ee" className="font-['Liberation_Serif',serif]">
        A
      </text>
    ),
  },
  {
    name: "Place arc",
    menu: true,
    art: <path d="M5 26C-2 14 7 5 16 5s18 9 11 21" fill="none" stroke="#5f97d8" strokeWidth="2" />,
  },
  {
    name: "Place note",
    menu: true,
    art: (
      <>
        <path d="M2 14h28v4H2z" fill="#c98a28" />
        <path d="M11 7h10l5 9-5 10H11L6 16z" fill="#f7c53d" stroke="#e0a028" strokeWidth="1.500" />
      </>
    ),
  },
];

function ActiveBar() {
  return (
    <div className="flex h-[50px] items-center rounded-lg bg-[#404040] px-[5px]">
      {tools.map((tool, i) => (
        <div key={tool.name} className="flex items-center">
          {i === 4 && <span className="h-8 w-[2px] bg-[#2d2d2d]" />}
          <button aria-label={tool.name} className="relative flex h-[50px] w-[50px] items-center justify-center">
            <svg viewBox="0 0 32 32" className="size-8">
              {tool.art}
            </svg>
            {tool.menu && (
              <svg viewBox="0 0 8 8" className="absolute right-0.5 bottom-[3px] size-2">
                <path d="M8 0v8H0z" fill="#fff" />
              </svg>
            )}
          </button>
        </div>
      ))}
    </div>
  );
}

function Editor() {
  return (
    <main className="flex min-w-0 flex-1 flex-col overflow-hidden">
      <div className="flex h-[37px] shrink-0 items-center text-[17px] leading-6 text-[#dedede]">
        <button className="flex items-center gap-2 px-2">
          <HomePageIcon />
          Home Page
        </button>
        <button className="flex h-full items-center gap-2 rounded-t-md border border-b-0 border-[#262626] bg-[#555] pr-1 pl-2">
          <SchIcon className="h-[22px] w-8" />
          (7) [2] 电源与保护电路.SchDoc
          <Caret className="h-2.5 w-4 text-white" />
        </button>
        <button className="flex items-center gap-2 pl-2.5">
          <PcbIcon className="h-6 w-8" />
          BOOST压控.PcbDoc
        </button>
      </div>
      <div className="flex h-[63px] shrink-0 justify-center bg-[#c3c3c3] pt-[5px]">
        <ActiveBar />
      </div>
      <Sheet />
      <div className="min-h-0 flex-1 bg-[#e2e2e2]" />
      <div className="flex h-9 shrink-0 items-start gap-0.5 pl-0.5 text-[17px] leading-8">
        <button className="h-[31px] border border-[#262626] bg-[#505050] px-2 font-bold text-white">Editor</button>
        <button className="h-[31px] border border-[#262626] bg-[#383838] px-2 text-[#dedede]">电源与保护电路</button>
      </div>
    </main>
  );
}

/* ---------- properties panel ---------- */

const fieldClass =
  "w-full min-w-0 rounded-md border border-[#252525] bg-[#2e2e2e] px-2 text-base leading-6 text-[#efefef] outline-none";

function Row({ label, htmlFor, children }: { label?: string; htmlFor?: string; children: ReactNode }) {
  return (
    <div className="flex h-[34px] items-center gap-[18px]">
      <label htmlFor={htmlFor} className="w-[147px] shrink-0 text-right">
        {label}
      </label>
      <div className="flex min-w-0 flex-1 items-center gap-1.5">{children}</div>
    </div>
  );
}

function TextField({ id, value }: { id: string; value: string }) {
  return <input id={id} defaultValue={value} className={clsx(fieldClass, "h-[34px]")} />;
}

function Tick({ id, label }: { id: string; label?: string }) {
  return (
    <span className="relative size-6 shrink-0">
      <input
        id={id}
        type="checkbox"
        defaultChecked
        aria-label={label}
        className="peer block size-6 appearance-none rounded-[5px] border border-[#2a2a2a] bg-[#555]"
      />
      <svg viewBox="0 0 24 24" className="pointer-events-none absolute inset-0 hidden size-6 peer-checked:block">
        <path d="m6 12 4 4 8-8" fill="none" stroke="#fff" strokeWidth="1.500" />
      </svg>
    </span>
  );
}

function Dropdown({ id, value, className = "w-full" }: { id: string; value: string; className?: string }) {
  return (
    <span className={clsx("relative block", className)}>
      <select
        id={id}
        aria-label={id}
        defaultValue={value}
        className="block h-[34px] w-full appearance-none rounded-md border border-[#2a2a2a] bg-linear-to-b from-[#636363] to-[#525252] px-2 text-base leading-6 text-[#efefef]"
      >
        <option>{value}</option>
      </select>
      <Caret className="pointer-events-none absolute top-[13px] right-2 h-2 w-3 text-white" />
    </span>
  );
}

function Segmented({ options, active }: { options: string[]; active: string }) {
  return (
    <div className="flex h-[35px] divide-x divide-[#2a2a2a] overflow-hidden rounded-md border border-[#2a2a2a]">
      {options.map((option) => (
        <button key={option} className={clsx("flex-1 text-[#efefef]", option === active ? "bg-[#6384a3]" : "bg-[#545454]")}>
          {option}
        </button>
      ))}
    </div>
  );
}

function SectionTitle({ children }: { children: ReactNode }) {
  return (
    <h3 className="flex items-center gap-1 font-bold text-white">
      <Expander open className="size-2.5" />
      {children}
    </h3>
  );
}

function Swatch({ color, label }: { color: string; label: string }) {
  return (
    <button aria-label={label} className="size-[33px] rounded-lg border border-[#2a2a2a] bg-[#5a5a5a] p-1">
      <span className={clsx("block size-full border border-[#2a2a2a]", color)} />
    </button>
  );
}

function PropertiesPanel() {
  return (
    <aside className="flex w-[545px] shrink-0 flex-col text-base leading-6 text-[#d6d6d6]">
      <div className="flex min-h-0 flex-1 flex-col bg-[#404040]">
        <PanelHeader title="Properties" />
        <div className="mx-3 mt-3 flex h-[38px] shrink-0 items-center">
          <span className="flex-1">Document Options</span>
          <span className="mr-2">Components (and 11 more)</span>
          <button
            aria-label="Selection filter"
            className="flex h-[38px] w-11 items-center justify-center rounded-l-md border border-[#2a2a2a] bg-[#6384a3]"
          >
            <svg viewBox="0 0 18 16" className="h-4 w-[18px]">
              <path d="M0 0h18l-7 8v8H7V8z" fill="#fff" />
            </svg>
          </button>
          <button
            aria-label="Filter options"
            className="flex h-[38px] w-[21px] items-center justify-center rounded-r-md border border-l-0 border-[#2a2a2a] bg-[#545454] text-white"
          >
            <Caret />
          </button>
        </div>
        <SearchBox id="property-search" className="mx-3 mt-[15px] h-[33px] shrink-0 px-2.5" />
        <div className="mr-[15px] ml-3 mt-[21px] flex shrink-0 border-b border-[#262626] pl-3.5">
          <button className="h-[31px] rounded-t-md border border-b-0 border-[#262626] bg-[#505050] px-[9px] text-[#efefef]">General</button>
          <button className="h-[31px] rounded-t-md border border-b-0 border-[#262626] bg-[#353535] px-[9px]">Parameters</button>
        </div>
        <div className="flex min-h-0 flex-1 pl-3">
          <div className="min-w-0 flex-1 overflow-hidden">
            <div className="flex h-[25px] items-end gap-[7px] overflow-hidden rounded-b-md bg-[#484848] px-[9px] pb-3">
              {["Power Ports", "Texts", "Drawing Objects", "Other"].map((kind) => (
                <button key={kind} className="h-[34px] shrink-0 rounded-md border border-[#2a2a2a] bg-[#6384a3] px-3 text-[#efefef]">
                  {kind}
                </button>
              ))}
            </div>

            <div className="mt-[22px]">
              <SectionTitle>General</SectionTitle>
            </div>
            <section className="mt-2 rounded-md bg-[#484848] px-[9px] pt-[9px] pb-[11px]">
              <p className="mb-0.5">Units</p>
              <Segmented options={["mm", "mils"]} active="mils" />
              <hr className="mt-4 mb-[17px] border-t-2 border-[#262626]" />
              <div className="flex flex-col gap-1">
                <Row label="Visible Grid" htmlFor="visible-grid">
                  <TextField id="visible-grid" value="100mil" />
                  <button
                    aria-label="Toggle grid"
                    className="flex h-[33px] w-[33px] shrink-0 items-center justify-center rounded-md border border-[#2a2a2a] bg-[#545454]"
                  >
                    <svg viewBox="0 0 16 12" className="h-3 w-4">
                      <path d="M0 6C4-2 12-2 16 6 12 14 4 14 0 6z" fill="#fff" />
                      <circle cx="8" cy="6" r="3" fill="none" stroke="#444" strokeWidth="1.500" />
                    </svg>
                  </button>
                </Row>
                <Row label="Snap Grid" htmlFor="snap-grid">
                  <Tick id="snap-grid-on" label="Snap grid enabled" />
                  <TextField id="snap-grid" value="100mil" />
                  <span className="w-[33px] shrink-0 pl-2 text-[#8a8a8a]">G</span>
                </Row>
                <Row>
                  <Tick id="hotspots" />
                  <label htmlFor="hotspots">Snap to Electrical Object Hotspots</label>
                </Row>
                <Row label="Snap Distance" htmlFor="snap-distance">
                  <TextField id="snap-distance" value="40mil" />
                </Row>
                <Row label="Document Font">
                  <a href="#font" className="border-b border-dashed border-[#8cb8f0] leading-5 text-[#8cb8f0]">
                    Times New Roman, 10
                  </a>
                </Row>
                <Row label="Sheet Border" htmlFor="sheet-border">
                  <Tick id="sheet-border" />
                  <span className="ml-1.5 flex">
                    <Swatch color="bg-black" label="Sheet border color" />
                  </span>
                </Row>
                <Row label="Sheet Color">
                  <Swatch color="bg-[#fffcf7]" label="Sheet color" />
                </Row>
              </div>
            </section>

            <div className="mt-[22px]">
              <SectionTitle>Page Options</SectionTitle>
            </div>
            <section className="mt-2 rounded-md bg-[#484848] px-[9px] pt-3 pb-[15px]">
              <h4 className="mb-[3px] font-bold text-white">Formatting and Size</h4>
              <Segmented options={["Template", "Standard", "Custom"]} active="Standard" />
              <div className="mt-7 flex flex-col gap-2">
                <Row label="Sheet Size" htmlFor="sheet-size">
                  <Dropdown id="sheet-size" value="A4" className="w-[139px] shrink-0" />
                  <span className="flex-1 pr-1 text-right whitespace-nowrap">11500mil&nbsp; x &nbsp;7600mil</span>
                </Row>
                <Row label="Orientation" htmlFor="orientation">
                  <Dropdown id="orientation" value="Landscape" />
                </Row>
                <Row>
                  <Tick id="title-block" />
                  <label htmlFor="title-block" className="flex-1">
                    Title Block
                  </label>
                  <Dropdown id="title-block-style" value="Standard" className="w-[186px] shrink-0" />
                </Row>
              </div>
              <hr className="mt-[22px] mb-[18px] border-[#262626]" />
              <h4 className="font-bold text-white">Margin and Zones</h4>
              <div className="flex flex-col gap-1.5">
                <div className="mt-[5px] flex h-6 items-center gap-1.5 pl-[165px]">
                  <Tick id="show-zones" />
                  <label htmlFor="show-zones">Show Zones</label>
                </div>
                <Row label="Vertical" htmlFor="vertical-zones">
                  <TextField id="vertical-zones" value="4" />
                </Row>
                <Row label="Horizontal" htmlFor="horizontal-zones">
                  <TextField id="horizontal-zones" value="4" />
                </Row>
                <Row label="Origin" htmlFor="origin">
                  <Dropdown id="origin" value="Upper Left" />
                </Row>
              </div>
            </section>
          </div>
          <Scrollbar className="mr-[15px] w-[21px] pt-2.5 pb-0.5" before="h-[170px]" after="h-2.5" />
        </div>
        <p className="mt-5 h-[21px] shrink-0 pl-1 text-[15px] leading-5">Nothing selected</p>
      </div>
      <BottomTabs tabs={["Components", "Properties"]} active="Properties" />
    </aside>
  );
}

/* ---------- window ---------- */

export default function App() {
  return (
    <div className={clsx("flex h-screen flex-col overflow-hidden bg-[#4e4e4e] px-[11px] pb-[11px]", uiFont)}>
      <TitleBar />
      <MenuBar />
      <div className="flex min-h-0 flex-1 gap-[5px] bg-[#353535] px-1.5 pt-1.5">
        <ProjectsPanel />
        <Editor />
        <PropertiesPanel />
      </div>
      <footer className="flex h-9 shrink-0 items-center bg-[#404040] pr-1 pl-2 text-base leading-6 text-[#d6d6d6]">
        <div className="flex w-[641px] gap-5">
          <span>X:4500.000mil Y:2100.000mil</span>
          <span>Grid:100mil</span>
        </div>
        <span className="h-8 w-px bg-[#363636]" />
        <span className="ml-[648px] h-8 w-px bg-[#363636]" />
        <button className="ml-auto h-[26px] w-[90px] rounded-md border border-[#262626] bg-[#545454] leading-5 text-[#efefef]">
          Panels
        </button>
      </footer>
    </div>
  );
}
